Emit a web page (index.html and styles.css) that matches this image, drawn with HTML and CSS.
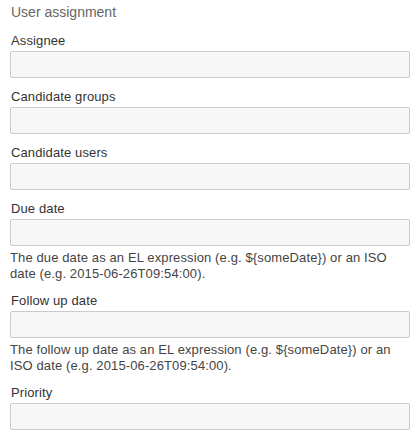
FILE: index.html
```html
<!DOCTYPE html>
<html>
<head>
<meta charset="utf-8">
<link rel="stylesheet" href="styles.css">
</head>
<body>
<div class="panel">
  <div class="group-label">User assignment</div>
  <div class="entry">
    <label class="label">Assignee</label>
    <div class="input"></div>
  </div>
  <div class="entry">
    <label class="label">Candidate groups</label>
    <div class="input"></div>
  </div>
  <div class="entry">
    <label class="label">Candidate users</label>
    <div class="input"></div>
  </div>
  <div class="entry">
    <label class="label">Due date</label>
    <div class="input"></div>
    <div class="description">The due date as an EL expression (e.g. ${someDate}) or an ISO date (e.g. 2015-06-26T09:54:00).</div>
  </div>
  <div class="entry">
    <label class="label">Follow up date</label>
    <div class="input"></div>
    <div class="description">The follow up date as an EL expression (e.g. ${someDate}) or an ISO date (e.g. 2015-06-26T09:54:00).</div>
  </div>
  <div class="entry">
    <label class="label">Priority</label>
    <div class="input"></div>
  </div>
</div>
</body>
</html>
```

FILE: styles.css
```css
html, body {
  margin: 0;
  padding: 0;
  background: #ffffff;
}
.panel {
  font-family: "Liberation Sans", Arial, sans-serif;
  padding: 4px 7px 0 10px;
  width: 400px;
}
.group-label {
  font-size: 14px;
  line-height: 17px;
  color: #666666;
  padding-left: 1px;
  margin-bottom: 12px;
}
.entry {
  margin-bottom: 11px;
}
.label {
  display: block;
  font-size: 13px;
  line-height: 16px;
  color: #333333;
  letter-spacing: 0.12px;
  padding-left: 1px;
  margin-bottom: 2px;
}
.input {
  box-sizing: border-box;
  height: 27px;
  width: 400px;
  border: 1px solid #cbc9d0;
  border-radius: 2px;
  background: #f7f7f8;
}
.description {
  font-size: 13px;
  line-height: 16px;
  color: #444444;
  letter-spacing: 0.12px;
  margin-top: 4px;
}
```
